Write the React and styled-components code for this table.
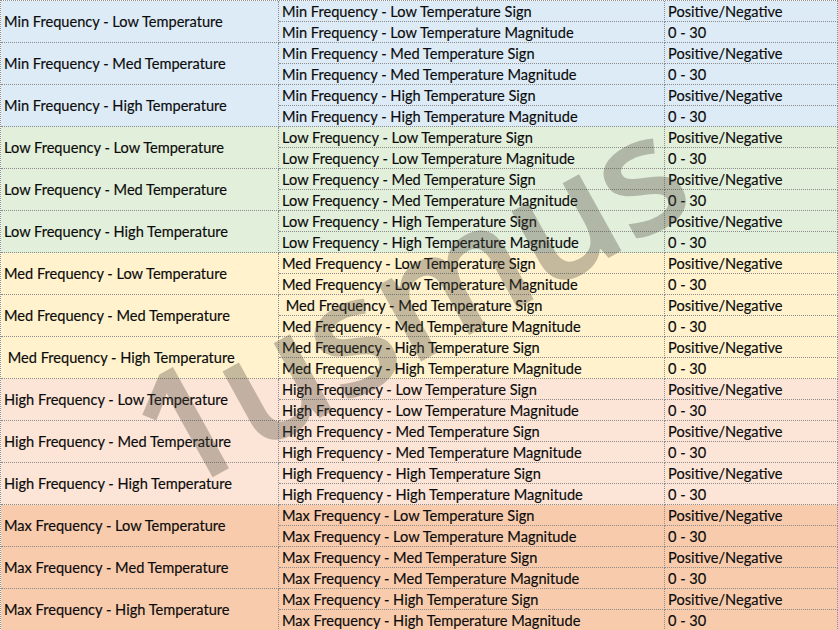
import styled, { createGlobalStyle } from "styled-components";

const GlobalStyle = createGlobalStyle`
    html, body {
        margin: 0;
        padding: 0;
        background: #fff;
        overflow: hidden;
    }
`;

const Sheet = styled.div`
    position: relative;
    width: 838px;
    height: 630px;
    overflow: hidden;
    font-family: Lato, "Liberation Sans", sans-serif;
    font-size: 14.6px;
    color: #0a0a0a;
`;

const Grid = styled.div`
    display: grid;
    grid-template-columns: 278px 386px 173px;
    grid-auto-rows: 21px;
    border-top: 1px dotted #8c8c8c;
    border-left: 1px dotted #8c8c8c;
`;

const colours = {
    Min: "#ddebf7",
    Low: "#e2efda",
    Med: "#fff2cc",
    High: "#fce4d6",
    Max: "#f8cbad",
};

const Cell = styled.div`
    box-sizing: border-box;
    background: ${p => p.$bg};
    border-right: 1px dotted #8c8c8c;
    border-bottom: 1px dotted #8c8c8c;
    padding: 2px 3px 0;
    display: flex;
    align-items: center;
    white-space: pre;
    overflow: hidden;
    line-height: 1;
    -webkit-text-stroke: 0.15px #0a0a0a;
`;

const GroupCell = styled(Cell)`
    grid-row: span 2;
`;

const Watermark = styled.div`
    position: absolute;
    left: 406px;
    top: 298px;
    transform: translate(-50%, -50%) rotate(-29deg);
    font-family: "Open Sans", "Liberation Sans", sans-serif;
    font-weight: 600;
    font-size: 162px;
    letter-spacing: -2px;
    line-height: 1;
    color: rgba(75, 70, 62, 0.33);
    pointer-events: none;
    white-space: nowrap;
`;

const freqs = ["Min", "Low", "Med", "High", "Max"];
const temps = ["Low", "Med", "High"];

// leading spaces that are in the original sheet
const padGroup = { "Med-High": " " };
const padSign = { "Med-Med": " " };

export default function App() {
    return (
        <Sheet>
            <GlobalStyle />
            <Grid>
                {freqs.map(f =>
                    temps.map(t => {
                        const bg = colours[f];
                        const key = f + "-" + t;
                        const label = `${f} Frequency - ${t} Temperature`;
                        return [
                            <GroupCell key={key + "g"} $bg={bg}>{(padGroup[key] || "") + label}</GroupCell>,
                            <Cell key={key + "s"} $bg={bg}>{(padSign[key] || "") + label + " Sign"}</Cell>,
                            <Cell key={key + "sv"} $bg={bg}>Positive/Negative</Cell>,
                            <Cell key={key + "m"} $bg={bg} style={{ gridColumn: 2 }}>{label + " Magnitude"}</Cell>,
                            <Cell key={key + "mv"} $bg={bg}>0 - 30</Cell>,
                        ];
                    })
                )}
            </Grid>
            <Watermark>1usmus</Watermark>
        </Sheet>
    );
}
